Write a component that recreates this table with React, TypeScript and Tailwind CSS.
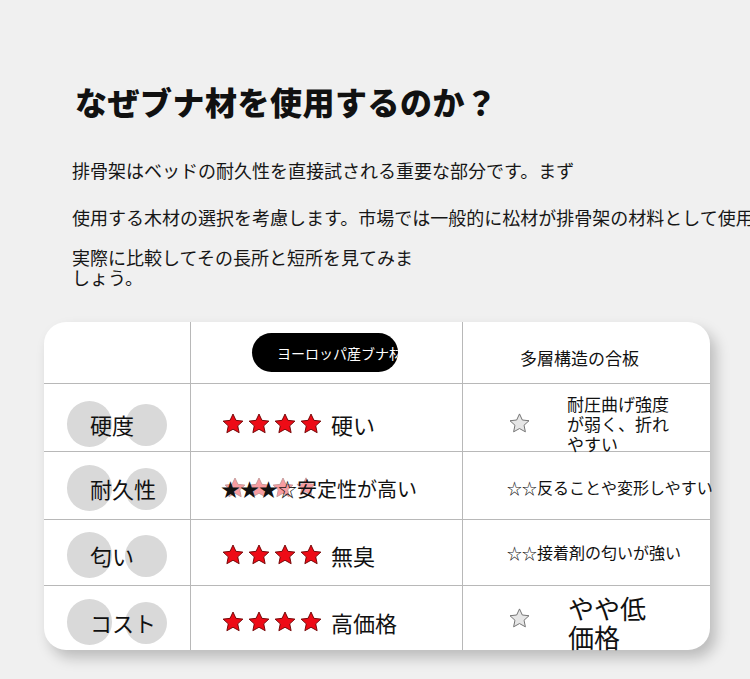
import React from "react";

const STAR = "M12 2l2.94 6.34 6.96.78-5.16 4.72 1.4 6.86L12 17.27 5.86 20.7l1.4-6.86L2.1 9.12l6.96-.78z";

function RedStar({ size = 24 }: { size?: number }) {
  return (
    <svg width={size} height={size} viewBox="0 0 24 24">
      <path d={STAR} fill="#ee0b16" stroke="#6a0000" strokeWidth="0.9" strokeLinejoin="round" />
    </svg>
  );
}

function GrayStar() {
  return (
    <svg width="23" height="23" viewBox="0 0 24 24">
      <path d={STAR} fill="#e6e6e6" stroke="#707070" strokeWidth="1" strokeLinejoin="round" />
    </svg>
  );
}

function FourStars() {
  return (
    <div className="flex items-center gap-[2px]">
      <RedStar />
      <RedStar />
      <RedStar />
      <RedStar />
    </div>
  );
}

function Label({ text }: { text: string }) {
  return (
    <div className="relative ml-[23px] w-[100px] h-[46px] flex items-center">
      <div className="absolute left-0 top-0 w-[45px] h-[46px] rounded-full bg-[#d9d9d9]" />
      <div className="absolute left-[58px] top-[3px] w-[42px] h-[42px] rounded-full bg-[#d9d9d9]" />
      <span className="relative pl-[23px] text-[22px] leading-[28px] text-[#111] whitespace-nowrap">{text}</span>
    </div>
  );
}

const cellL = "border-r border-b border-[#b8b8b8] flex items-center";
const cellM = "border-r border-b border-[#b8b8b8] flex items-center pl-[30px]";
const cellR = "border-b border-[#b8b8b8] flex items-center";

export default function App() {
  return (
    <div className="w-[750px] h-[679px] bg-[#f0f0f0] overflow-hidden text-[#111] font-['Noto_Sans_CJK_JP','Noto_Sans',sans-serif]">
      <h1 className="pl-[75px] pt-[80px] text-[32px] leading-[42px] font-black tracking-[0.5px]">なぜブナ材を使用するのか？</h1>
      <div className="pl-[72px] text-[18px] text-[#161616]">
        <p className="mt-[36px] leading-[24px] whitespace-nowrap">排骨架はベッドの耐久性を直接試される重要な部分です。まず</p>
        <p className="mt-[23px] leading-[24px] whitespace-nowrap">使用する木材の選択を考慮します。市場では一般的に松材が排骨架の材料として使用</p>
        <p className="mt-[18px] leading-[20px] whitespace-nowrap">
          実際に比較してその長所と短所を見てみま
          <br />
          しょう。
        </p>
      </div>

      <div className="ml-[44px] mt-[35px] w-[666px] h-[328px] bg-white rounded-[22px] shadow-[6px_8px_14px_rgba(0,0,0,0.22)] grid grid-cols-[147px_272px_247px] grid-rows-[62px_68px_68px_66px_64px]">
        {/* header */}
        <div className={cellL} />
        <div className="border-r border-b border-[#b8b8b8] flex items-center pl-[61px]">
          <div className="w-[146px] h-[39px] rounded-full bg-black overflow-hidden flex items-center pl-[25px]">
            <span className="text-white text-[14px] leading-[20px] whitespace-nowrap">ヨーロッパ産ブナ材</span>
          </div>
        </div>
        <div className={cellR + " pl-[57px] pt-[10px]"}>
          <span className="text-[17px] leading-[24px]">多層構造の合板</span>
        </div>

        {/* row 1 */}
        <div className={cellL + " pt-[12px]"}>
          <Label text="硬度" />
        </div>
        <div className={cellM + " pt-[12px]"}>
          <FourStars />
          <span className="ml-[8px] text-[22px] leading-[28px]">硬い</span>
        </div>
        <div className={cellR + " pl-[45px] pt-[12px]"}>
          <GrayStar />
          <div className="ml-[36px] text-[17px] leading-[20px] whitespace-nowrap">
            耐圧曲げ強度
            <br />
            が弱く、折れ
            <br />
            やすい
          </div>
        </div>

        {/* row 2 */}
        <div className={cellL + " pt-[4px]"}>
          <Label text="耐久性" />
        </div>
        <div className={cellM + " pt-[6px]"}>
          <div className="relative">
            <div className="absolute left-[2px] top-[0px] flex gap-[0px] opacity-40">
              <RedStar size={24} />
              <RedStar size={24} />
              <RedStar size={24} />
              <RedStar size={22} />
            </div>
            <span className="relative text-[20px] leading-[26px] whitespace-nowrap">
              <span className="text-[19px]">★★★☆</span>安定性が高い
            </span>
          </div>
        </div>
        <div className={cellR + " pl-[44px] pt-[4px]"}>
          <span className="text-[16px] leading-[22px] whitespace-nowrap">
            <span className="text-[15px]">☆☆</span>反ることや変形しやすい
          </span>
        </div>

        {/* row 3 */}
        <div className={cellL + " pt-[4px]"}>
          <Label text="匂い" />
        </div>
        <div className={cellM + " pt-[4px]"}>
          <FourStars />
          <span className="ml-[8px] text-[22px] leading-[28px]">無臭</span>
        </div>
        <div className={cellR + " pl-[44px]"}>
          <span className="text-[16px] leading-[22px] whitespace-nowrap">
            <span className="text-[15px]">☆☆</span>接着剤の匂いが強い
          </span>
        </div>

        {/* row 4 */}
        <div className="border-r border-[#b8b8b8] flex items-center pt-[8px]">
          <Label text="コスト" />
        </div>
        <div className="border-r border-[#b8b8b8] flex items-center pl-[30px] pt-[8px]">
          <FourStars />
          <span className="ml-[8px] text-[22px] leading-[28px]">高価格</span>
        </div>
        <div className="flex items-center pl-[45px]">
          <GrayStar />
          <div className="ml-[37px] mt-[8px] text-[26px] leading-[29px] whitespace-nowrap">
            やや低
            <br />
            価格
          </div>
        </div>
      </div>
    </div>
  );
}
